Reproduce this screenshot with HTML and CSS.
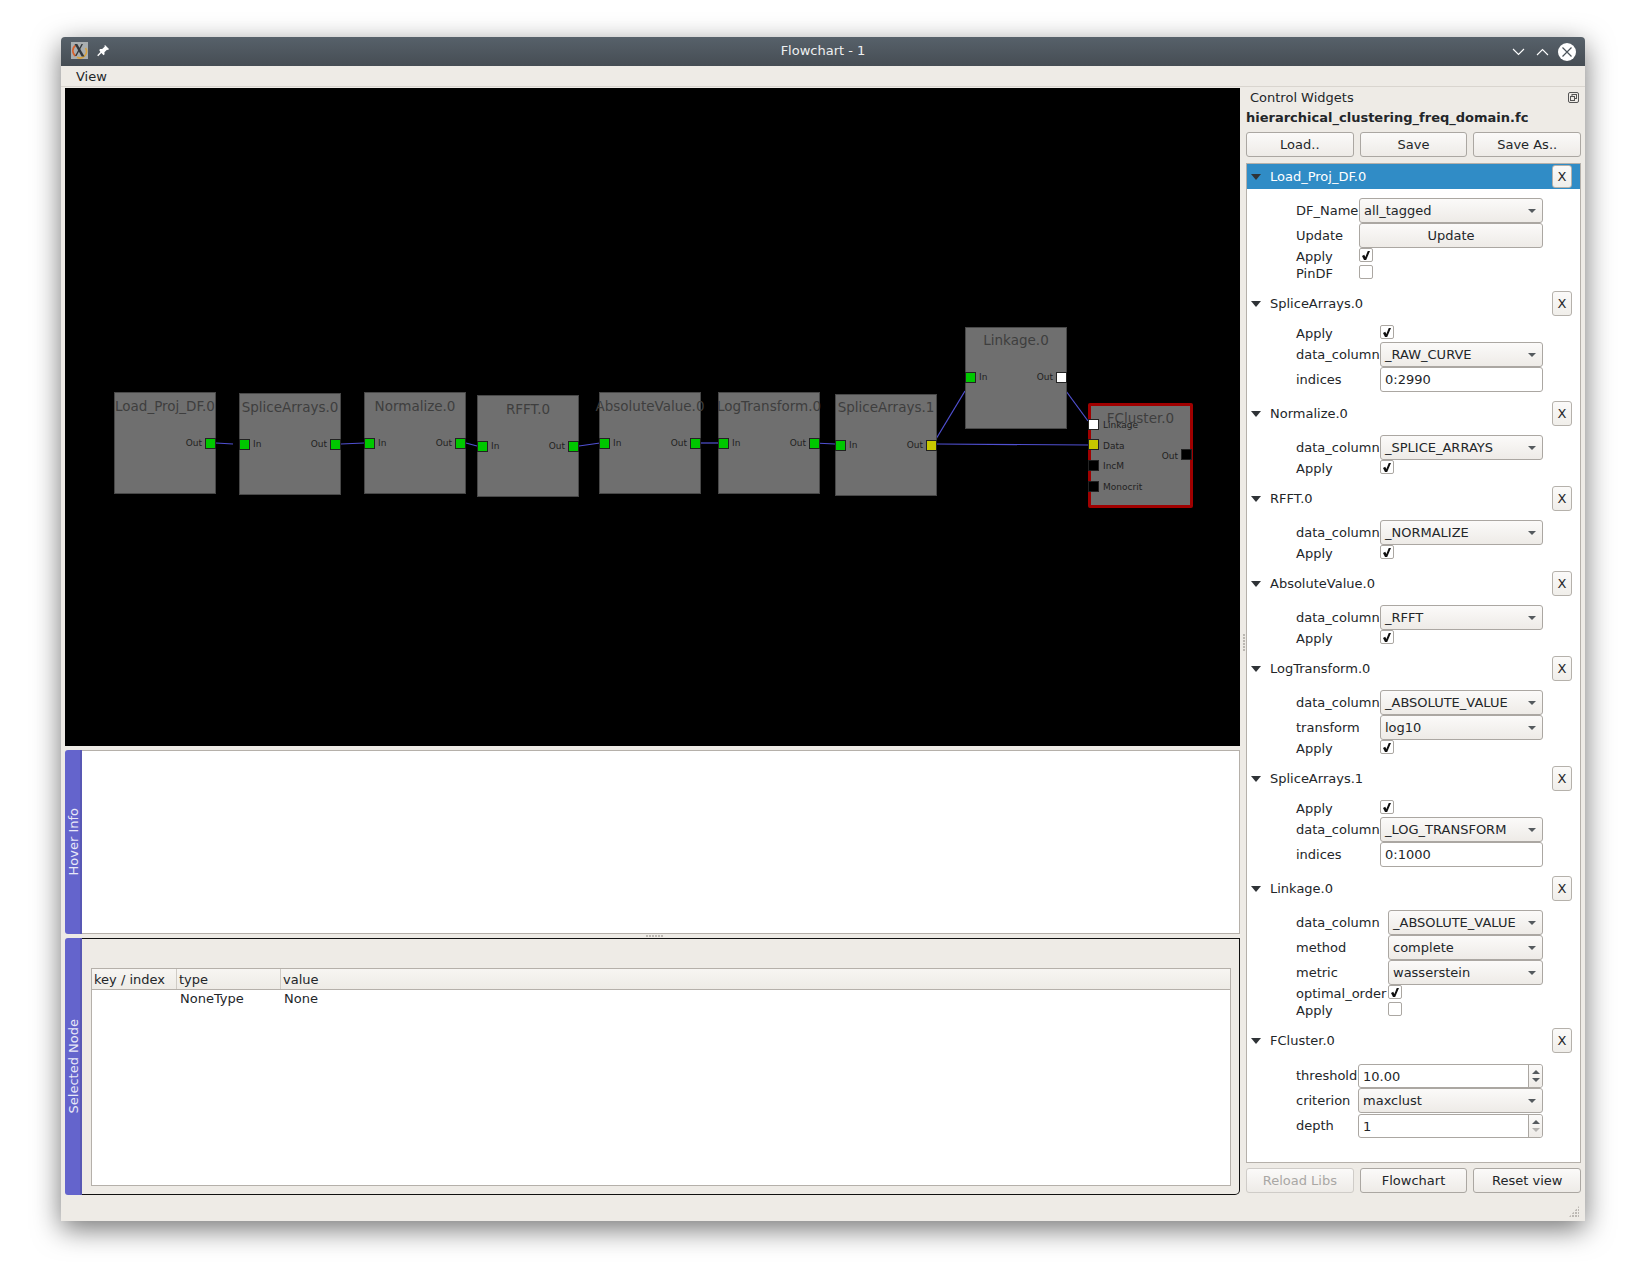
FILE: index.html
```html
<!DOCTYPE HTML>
<html>
<head>
    <meta charset="utf-8">
    <title>Flowchart - 1</title>
    <link rel="stylesheet" href="styles.css">
</head>
<body>
<div class="window">
    <div class="titlebar">
        <div class="title-left">
            <svg class="app-icon" width="17" height="17" viewBox="0 0 17 17">
                <rect width="17" height="17" fill="#a9aeb0"/>
                <path d="M4.500 3.500A6.500 6.500 0 0 0 4.500 14" fill="none" stroke="#d8602a" stroke-width="1.600"/>
                <path d="M6 15.200A6.500 6.500 0 0 0 14.500 6" fill="none" stroke="#d9a23c" stroke-width="1.600"/>
                <path d="M3.500 2l2.800 0 7.200 12.500-2.800 0z" fill="#33383c"/>
                <path d="M12 2l-1.500 0-6.500 12 1.500 0z" fill="#33383c"/>
            </svg>
            <svg width="13" height="13" viewBox="0 0 13 13">
                <path d="M8 1l4 4-1 1-1-.3-2.600 2.600.2 2-1 1-2.200-2.200-3.200 3.200-1-1 3.200-3.200L2.200 5.900l1-1 2 .2L7.800 2.500 7.500 1.500z" fill="#fff"/>
            </svg>
        </div>
        <div class="title-text">Flowchart - 1</div>
        <div class="title-right">
            <svg width="13" height="8" viewBox="0 0 13 8"><path d="M1 1l5.500 5.500L12 1" fill="none" stroke="#fff" stroke-width="1.100"/></svg>
            <svg width="13" height="8" viewBox="0 0 13 8"><path d="M1 7l5.500-5.500L12 7" fill="none" stroke="#fff" stroke-width="1.100"/></svg>
            <svg class="close-icon" width="18" height="18" viewBox="0 0 18 18">
                <circle cx="9" cy="9" r="9" fill="#fff"/>
                <path d="M4.500 4.500l9 9M13.500 4.500l-9 9" stroke="#4b535a" stroke-width="1.200"/>
            </svg>
        </div>
    </div>
    <div class="menubar"><span class="menu-item">View</span></div>

    <div class="main">
        <div class="left-col">
            <div class="canvas">
                <svg class="wires" width="1175" height="658" viewBox="0 0 1175 658">
                    <path d="M151 355L168 356"/>
                    <path d="M276 356L299 355"/>
                    <path d="M401 355L412 358"/>
                    <path d="M514 358L535 355"/>
                    <path d="M636 355L653 355"/>
                    <path d="M749 355L770 356"/>
                    <path d="M872 356L1024 357"/>
                    <path d="M871 351L900 303"/>
                    <path d="M1001 303L1023 333"/>
                </svg>

                <div class="node" style="left:49px;top:304px">
                    <div class="node-title">Load_Proj_DF.0</div>
                    <div class="term term-out green"></div>
                    <div class="term-label label-out">Out</div>
                </div>
                <div class="node" style="left:174px;top:305px">
                    <div class="node-title">SpliceArrays.0</div>
                    <div class="term term-in green"></div>
                    <div class="term-label label-in">In</div>
                    <div class="term term-out green"></div>
                    <div class="term-label label-out">Out</div>
                </div>
                <div class="node" style="left:299px;top:304px">
                    <div class="node-title">Normalize.0</div>
                    <div class="term term-in green"></div>
                    <div class="term-label label-in">In</div>
                    <div class="term term-out green"></div>
                    <div class="term-label label-out">Out</div>
                </div>
                <div class="node" style="left:412px;top:307px">
                    <div class="node-title">RFFT.0</div>
                    <div class="term term-in green"></div>
                    <div class="term-label label-in">In</div>
                    <div class="term term-out green"></div>
                    <div class="term-label label-out">Out</div>
                </div>
                <div class="node" style="left:534px;top:304px">
                    <div class="node-title">AbsoluteValue.0</div>
                    <div class="term term-in green"></div>
                    <div class="term-label label-in">In</div>
                    <div class="term term-out green"></div>
                    <div class="term-label label-out">Out</div>
                </div>
                <div class="node" style="left:653px;top:304px">
                    <div class="node-title">LogTransform.0</div>
                    <div class="term term-in green"></div>
                    <div class="term-label label-in">In</div>
                    <div class="term term-out green"></div>
                    <div class="term-label label-out">Out</div>
                </div>
                <div class="node" style="left:770px;top:306px">
                    <div class="node-title title-high">SpliceArrays.1</div>
                    <div class="term term-in green"></div>
                    <div class="term-label label-in">In</div>
                    <div class="term term-out yellow"></div>
                    <div class="term-label label-out">Out</div>
                </div>
                <div class="node node-raised" style="left:900px;top:239px">
                    <div class="node-title title-high">Linkage.0</div>
                    <div class="term term-in green"></div>
                    <div class="term-label label-in">In</div>
                    <div class="term term-out white"></div>
                    <div class="term-label label-out">Out</div>
                </div>
                <div class="node node-selected" style="left:1023px;top:315px">
                    <div class="node-title">FCluster.0</div>
                    <div class="term term-in white" style="top:13px"></div>
                    <div class="term-label label-in" style="top:12px">Linkage</div>
                    <div class="term term-in yellow" style="top:33px"></div>
                    <div class="term-label label-in" style="top:33px">Data</div>
                    <div class="term term-in black" style="top:54px"></div>
                    <div class="term-label label-in" style="top:53px">IncM</div>
                    <div class="term term-in black" style="top:75px"></div>
                    <div class="term-label label-in" style="top:74px">Monocrit</div>
                    <div class="term term-out black" style="top:43px"></div>
                    <div class="term-label label-out" style="top:43px">Out</div>
                </div>
            </div>

            <div class="dock dock-hover">
                <div class="dock-tab"><span>Hover Info</span></div>
                <div class="hover-pane"></div>
            </div>
            <div class="dock dock-selected">
                <div class="dock-tab"><span>Selected Node</span></div>
                <div class="selected-pane">
                    <div class="data-table">
                        <div class="table-head">
                            <div class="col-key">key / index</div>
                            <div class="col-type">type</div>
                            <div class="col-value">value</div>
                        </div>
                        <div class="table-row">
                            <div class="col-key"></div>
                            <div class="col-type">NoneType</div>
                            <div class="col-value">None</div>
                        </div>
                    </div>
                </div>
            </div>
        </div>

        <div class="right-col">
            <div class="dock-title">
                <span>Control Widgets</span>
                <svg width="11" height="11" viewBox="0 0 11 11" fill="none" stroke="#555">
                    <rect x=".5" y=".5" width="10" height="10" rx="1.500"/>
                    <rect x="4" y="2.500" width="4.500" height="4" />
                    <rect x="2.500" y="4.500" width="4" height="4" fill="#eeebe6"/>
                </svg>
            </div>
            <div class="file-name">hierarchical_clustering_freq_domain.fc</div>
            <div class="button-row">
                <button class="btn">Load..</button>
                <button class="btn">Save</button>
                <button class="btn">Save As..</button>
            </div>

            <div class="tree">
                <div class="section-head selected">
                    <span class="arrow"></span><span class="section-name">Load_Proj_DF.0</span><button class="btn-x">X</button>
                </div>
                <div class="form form-short">
                    <label>DF_Name</label><div class="combo"><span>all_tagged</span></div>
                    <label>Update</label><button class="btn wide">Update</button>
                    <label class="short">Apply</label><div class="check on"></div>
                    <label class="short">PinDF</label><div class="check"></div>
                </div>

                <div class="section-head">
                    <span class="arrow"></span><span class="section-name">SpliceArrays.0</span><button class="btn-x">X</button>
                </div>
                <div class="form">
                    <label class="short">Apply</label><div class="check on"></div>
                    <label>data_column</label><div class="combo"><span>_RAW_CURVE</span></div>
                    <label>indices</label><div class="line-input">0:2990</div>
                </div>

                <div class="section-head">
                    <span class="arrow"></span><span class="section-name">Normalize.0</span><button class="btn-x">X</button>
                </div>
                <div class="form">
                    <label>data_column</label><div class="combo"><span>_SPLICE_ARRAYS</span></div>
                    <label class="short">Apply</label><div class="check on"></div>
                </div>

                <div class="section-head">
                    <span class="arrow"></span><span class="section-name">RFFT.0</span><button class="btn-x">X</button>
                </div>
                <div class="form">
                    <label>data_column</label><div class="combo"><span>_NORMALIZE</span></div>
                    <label class="short">Apply</label><div class="check on"></div>
                </div>

                <div class="section-head">
                    <span class="arrow"></span><span class="section-name">AbsoluteValue.0</span><button class="btn-x">X</button>
                </div>
                <div class="form">
                    <label>data_column</label><div class="combo"><span>_RFFT</span></div>
                    <label class="short">Apply</label><div class="check on"></div>
                </div>

                <div class="section-head">
                    <span class="arrow"></span><span class="section-name">LogTransform.0</span><button class="btn-x">X</button>
                </div>
                <div class="form">
                    <label>data_column</label><div class="combo"><span>_ABSOLUTE_VALUE</span></div>
                    <label>transform</label><div class="combo"><span>log10</span></div>
                    <label class="short">Apply</label><div class="check on"></div>
                </div>

                <div class="section-head">
                    <span class="arrow"></span><span class="section-name">SpliceArrays.1</span><button class="btn-x">X</button>
                </div>
                <div class="form">
                    <label class="short">Apply</label><div class="check on"></div>
                    <label>data_column</label><div class="combo"><span>_LOG_TRANSFORM</span></div>
                    <label>indices</label><div class="line-input">0:1000</div>
                </div>

                <div class="section-head">
                    <span class="arrow"></span><span class="section-name">Linkage.0</span><button class="btn-x">X</button>
                </div>
                <div class="form form-long">
                    <label>data_column</label><div class="combo"><span>_ABSOLUTE_VALUE</span></div>
                    <label>method</label><div class="combo"><span>complete</span></div>
                    <label>metric</label><div class="combo"><span>wasserstein</span></div>
                    <label class="short">optimal_order</label><div class="check on"></div>
                    <label class="short">Apply</label><div class="check"></div>
                </div>

                <div class="section-head">
                    <span class="arrow"></span><span class="section-name">FCluster.0</span><button class="btn-x">X</button>
                </div>
                <div class="form form-spin">
                    <label>threshold</label><div class="spin"><span>10.00</span><div class="spin-arrows"><i class="up"></i><i class="down"></i></div></div>
                    <label>criterion</label><div class="combo"><span>maxclust</span></div>
                    <label>depth</label><div class="spin spin-last"><span>1</span><div class="spin-arrows"><i class="up"></i><i class="down off"></i></div></div>
                </div>
            </div>

            <div class="button-row">
                <button class="btn disabled">Reload Libs</button>
                <button class="btn">Flowchart</button>
                <button class="btn">Reset view</button>
            </div>
        </div>
        <div class="split-dots horizontal"></div>
        <div class="split-dots vertical"></div>
    </div>
    <div class="statusbar"><div class="grip"></div></div>
</div>
</body>
</html>
```

FILE: styles.css
```css
* {
    box-sizing: border-box;
}
html, body {
    margin: 0;
    background-color: #fff;
}
body {
    height: 1282px;
    padding: 37px 61px 61px;
    overflow: hidden;
    font-family: "DejaVu Sans", sans-serif;
    font-size: 13px;
    color: #232629;
}
button {
    font: inherit;
    color: inherit;
}
.window {
    position: relative;
    width: 1524px;
    height: 1184px;
    display: flex;
    flex-direction: column;
    background-color: #eeebe6;
    border-radius: 4px 4px 0 0;
    box-shadow: 0 8px 28px rgba(0, 0, 0, 0.55);
}

/* title bar */
.titlebar {
    height: 29px;
    flex: none;
    position: relative;
    display: flex;
    justify-content: space-between;
    align-items: center;
    padding: 0 9px 0 10px;
    background: linear-gradient(#57616a, #464d54);
    border-radius: 4px 4px 0 0;
}
.title-left {
    display: flex;
    align-items: center;
    gap: 9px;
    margin-top: -2px;
}
.title-text {
    position: absolute;
    left: 0;
    right: 0;
    margin-top: -2px;
    text-align: center;
    color: #eef0f1;
}
.title-right {
    display: flex;
    align-items: center;
    gap: 11px;
}
.close-icon {
    margin-left: -2px;
}
.menubar {
    height: 21px;
    flex: none;
    padding: 1px 0 0 15px;
    line-height: 20px;
    border-bottom: 1px solid #d9d5cf;
}

/* main area */
.main {
    flex: 1;
    position: relative;
    display: flex;
    gap: 6px;
    padding: 0 4px;
}
.left-col {
    width: 1175px;
    display: flex;
    flex-direction: column;
    padding-top: 1px;
}
.right-col {
    width: 335px;
    display: flex;
    flex-direction: column;
}

/* flowchart canvas */
.canvas {
    position: relative;
    height: 658px;
    flex: none;
    background-color: #000;
    overflow: hidden;
}
.wires {
    position: absolute;
    left: 0;
    top: 0;
}
.wires path {
    fill: none;
    stroke: #5050d2;
    stroke-width: 1.2;
}
.node {
    position: absolute;
    width: 102px;
    height: 102px;
    background-color: #6f6f6f;
    border: 1px solid #484848;
}
.node-selected {
    width: 105px;
    height: 105px;
    border: 3px solid #a00000;
    border-radius: 2px;
}
.node-title {
    margin: 4px -10px 0;
    text-align: center;
    white-space: nowrap;
    font-size: 13.5px;
    line-height: 18px;
    color: #3e3e3e;
}
.node-title.title-high {
    margin-top: 3px;
}
.node-selected .node-title {
    margin-top: 3px;
}
.term {
    position: absolute;
    top: 45px;
    width: 11px;
    height: 11px;
    border: 1px solid #222;
}
.node-raised .term {
    top: 44px;
}
.term-in {
    left: -1px;
}
.term-out {
    right: -1px;
}
.node-selected .term-in {
    left: -3px;
}
.node-selected .term-out {
    right: -2px;
}
.green {
    background-color: #00c800;
}
.yellow {
    background-color: #c8c800;
}
.white {
    background-color: #fff;
}
.black {
    background-color: #000;
}
.term-label {
    position: absolute;
    top: 43px;
    font-size: 9px;
    line-height: 14px;
    color: #222;
    white-space: nowrap;
}
.node-raised .term-label {
    top: 42px;
}
.label-in {
    left: 13px;
}
.label-out {
    right: 13px;
}
.node-selected .label-in {
    left: 12px;
}
.node-selected .label-out {
    right: 12px;
}

/* left docks */
.dock {
    display: flex;
    flex: none;
    margin-top: 4px;
}
.dock-hover {
    height: 184px;
}
.dock-selected {
    height: 257px;
}
.dock-tab {
    width: 17px;
    flex: none;
    display: flex;
    align-items: center;
    justify-content: center;
    padding-left: 2px;
    background-color: #6464cc;
    border-right: 2px solid #5858b4;
    border-radius: 3px 0 0 3px;
    color: #e8e8f8;
}
.dock-tab span {
    writing-mode: vertical-rl;
    transform: rotate(180deg);
    white-space: nowrap;
}
.hover-pane {
    flex: 1;
    background-color: #fff;
    border: 1px solid #b5b0aa;
    border-left: none;
}
.selected-pane {
    flex: 1;
    padding: 29px 8px 8px 9px;
    border: 1px solid #111;
    border-left: none;
    border-radius: 0 0 5px 0;
}
.split-dots {
    position: absolute;
    background-image: radial-gradient(circle at 1px 1px, #b8b4af 0.7px, transparent 0.8px);
    background-size: 3px 3px;
}
.split-dots.horizontal {
    left: 585px;
    top: 848px;
    width: 18px;
    height: 2px;
}
.split-dots.vertical {
    left: 1182px;
    top: 547px;
    width: 2px;
    height: 18px;
}

/* data table */
.data-table {
    height: 100%;
    background-color: #fff;
    border: 1px solid #b5b0aa;
}
.table-head {
    height: 21px;
    display: flex;
    line-height: 21px;
    background: linear-gradient(#f7f5f2, #eeebe6);
    border-bottom: 1px solid #b5b0aa;
}
.table-head .col-key,
.table-head .col-type {
    border-right: 1px solid #cfcbc5;
}
.table-row {
    display: flex;
    line-height: 18px;
}
.table-row .col-type,
.table-row .col-value {
    padding-left: 3px;
}
.col-key {
    width: 85px;
    padding-left: 2px;
}
.col-type {
    width: 104px;
    padding-left: 2px;
}
.col-value {
    flex: 1;
    padding-left: 2px;
}

/* right dock */
.dock-title {
    height: 20px;
    display: flex;
    justify-content: space-between;
    align-items: center;
    padding-left: 4px;
    padding-right: 2px;
}
.file-name {
    height: 19px;
    margin-top: 1px;
    line-height: 19px;
    font-weight: bold;
}
.button-row {
    display: flex;
    gap: 6px;
    margin-top: 5px;
}
.button-row .btn {
    flex: 1;
}
.btn {
    height: 25px;
    padding: 0;
    background: linear-gradient(#fbfaf9, #eeebe7);
    border: 1px solid #aba7a2;
    border-radius: 3px;
}
.btn.disabled {
    color: #a9a7a4;
    border-color: #cfccc8;
}
.tree {
    height: 1000px;
    margin-top: 6px;
    background-color: #fff;
    border: 1px solid #b5b0aa;
}
.section-head {
    height: 25px;
    display: flex;
    align-items: center;
    padding: 0 8px 0 4px;
}
.section-head.selected {
    background-color: #308cc6;
    color: #fff;
}
.arrow {
    width: 0;
    height: 0;
    margin-right: 9px;
    border-left: 5px solid transparent;
    border-right: 5px solid transparent;
    border-top: 6px solid #2f3337;
}
.section-name {
    flex: 1;
}
.btn-x {
    width: 20px;
    height: 25px;
    padding: 0;
    background: linear-gradient(#fbfaf9, #f0eeea);
    border: 1px solid #b5b1ab;
    border-radius: 3px;
    color: #232629;
}
.section-head.selected .btn-x {
    height: 23px;
}
.form {
    display: grid;
    grid-template-columns: 84px 1fr;
    padding: 9px 37px 9px 49px;
    align-items: center;
}
.form-short {
    grid-template-columns: 63px 1fr;
}
.form-spin {
    grid-template-columns: 62px 1fr;
    height: 93px;
    padding-top: 10px;
}
.form-long {
    grid-template-columns: 92px 1fr;
}
.form label {
    white-space: nowrap;
    line-height: 25px;
}
.form label.short {
    line-height: 17px;
}
.combo, .line-input, .spin, .wide {
    height: 25px;
    line-height: 23px;
    border: 1px solid #aba7a2;
    border-radius: 3px;
}
.combo {
    position: relative;
    padding-left: 4px;
    background: linear-gradient(#fbfaf9, #eeebe7);
}
.combo::after {
    content: "";
    position: absolute;
    right: 6px;
    top: 10px;
    border-left: 4px solid transparent;
    border-right: 4px solid transparent;
    border-top: 4px solid #555a5e;
}
.wide {
    width: 100%;
}
.line-input {
    padding-left: 4px;
    background-color: #fff;
}
.check {
    position: relative;
    align-self: start;
    width: 14px;
    height: 14px;
    background-color: #fff;
    border: 1px solid #aba7a2;
    border-radius: 2px;
}
.check.on::after {
    content: "";
    position: absolute;
    left: 2px;
    top: 2px;
    width: 8px;
    height: 9px;
    background-color: #111;
    clip-path: polygon(0 55%, 28% 42%, 42% 66%, 72% 0, 100% 0, 52% 100%, 25% 100%);
}
.spin {
    display: flex;
    justify-content: space-between;
    height: 24px;
    padding-left: 4px;
    background-color: #fff;
}
.spin-last {
    margin-top: 1px;
}
.spin-arrows {
    width: 14px;
    display: flex;
    flex-direction: column;
    align-items: center;
    justify-content: center;
    gap: 4px;
    background: linear-gradient(#fbfaf9, #eeebe7);
    border-left: 1px solid #aba7a2;
    border-radius: 0 3px 3px 0;
}
.spin-arrows i {
    border-left: 4px solid transparent;
    border-right: 4px solid transparent;
}
.spin-arrows .up {
    border-bottom: 4px solid #555a5e;
}
.spin-arrows .down {
    border-top: 4px solid #555a5e;
}
.spin-arrows .down.off {
    border-top-color: #b4b2af;
}

/* status bar */
.statusbar {
    height: 28px;
    flex: none;
    position: relative;
}
.grip {
    position: absolute;
    right: 6px;
    bottom: 6px;
    width: 10px;
    height: 11px;
    background-image: radial-gradient(circle at 1px 1px, #bdb9b4 1px, transparent 1px);
    background-size: 3px 3px;
    clip-path: polygon(100% 0, 100% 100%, 0 100%);
}
```
